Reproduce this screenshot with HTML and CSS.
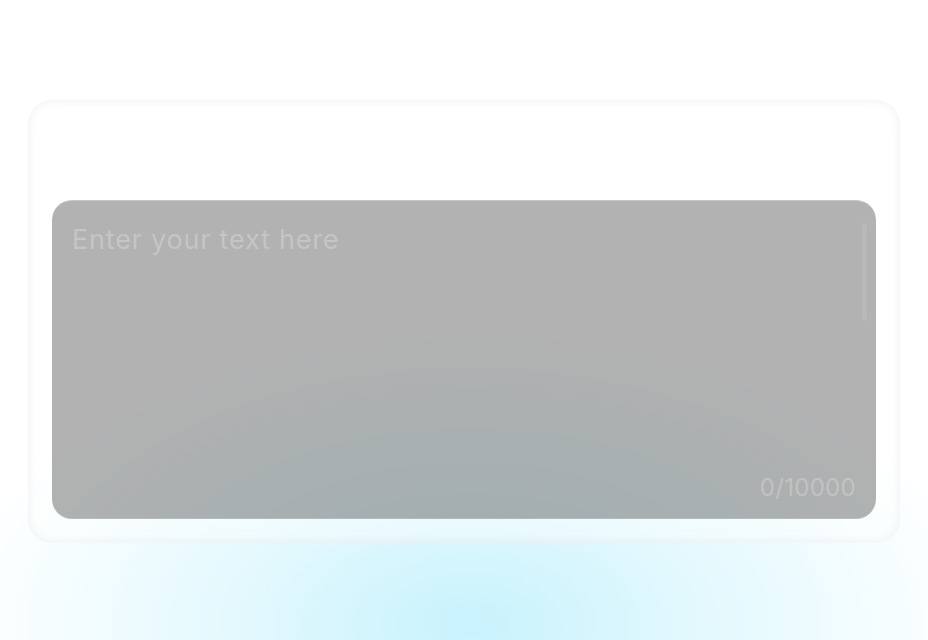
FILE: index.html
```html
<!DOCTYPE html>
<html lang="en">
<head>
<meta charset="utf-8">
<title>Text input</title>
<link rel="stylesheet" href="styles.css">
</head>
<body>
<main class="page">
  <section class="card">
    <div class="field">
      <textarea class="input" placeholder="Enter your text here" maxlength="10000"></textarea>
      <span class="thumb"></span>
      <span class="counter">0/10000</span>
    </div>
  </section>
</main>
</body>
</html>
```
FILE: styles.css
```css
html, body {
  margin: 0;
  height: 100%;
}
body {
  background:
    radial-gradient(ellipse 520px 300px at 470px 625px, rgba(200, 242, 252, 1) 0%, rgba(212, 245, 253, 0.65) 45%, rgba(255, 255, 255, 0) 100%),
    #ffffff;
  font-family: "Inter", "Open Sans", sans-serif;
  overflow: hidden;
}
.page {
  padding: 100px 28px 0 28px;
}
.card {
  box-sizing: border-box;
  width: 872px;
  height: 443px;
  padding: 100px 24px 24px 24px;
  border-radius: 24px;
  background: rgba(255, 255, 255, 0.4);
  box-shadow: inset 0 0 12px rgba(0, 0, 0, 0.06);
}
.field {
  position: relative;
  height: 319px;
  border-radius: 20px;
  background: rgba(0, 0, 0, 0.3);
  box-shadow: inset 0 1px 0 rgba(255, 255, 255, 0.25), inset 0 -1px 0 rgba(255, 255, 255, 0.15);
}
.input {
  display: block;
  box-sizing: border-box;
  width: 100%;
  height: 100%;
  margin: 0;
  padding: 22px 20px;
  border: none;
  outline: none;
  resize: none;
  background: transparent;
  font-family: inherit;
  font-size: 27px;
  line-height: 36px;
  letter-spacing: 0.8px;
  color: #ffffff;
}
.input::placeholder {
  color: #c5c5c5;
}
.thumb {
  position: absolute;
  top: 23px;
  right: 9px;
  width: 5px;
  height: 98px;
  border-radius: 3px;
  background: rgba(255, 255, 255, 0.08);
}
.counter {
  position: absolute;
  right: 20px;
  bottom: 16px;
  font-size: 24px;
  line-height: 30px;
  letter-spacing: 0.3px;
  color: #c2c2c2;
}
```
